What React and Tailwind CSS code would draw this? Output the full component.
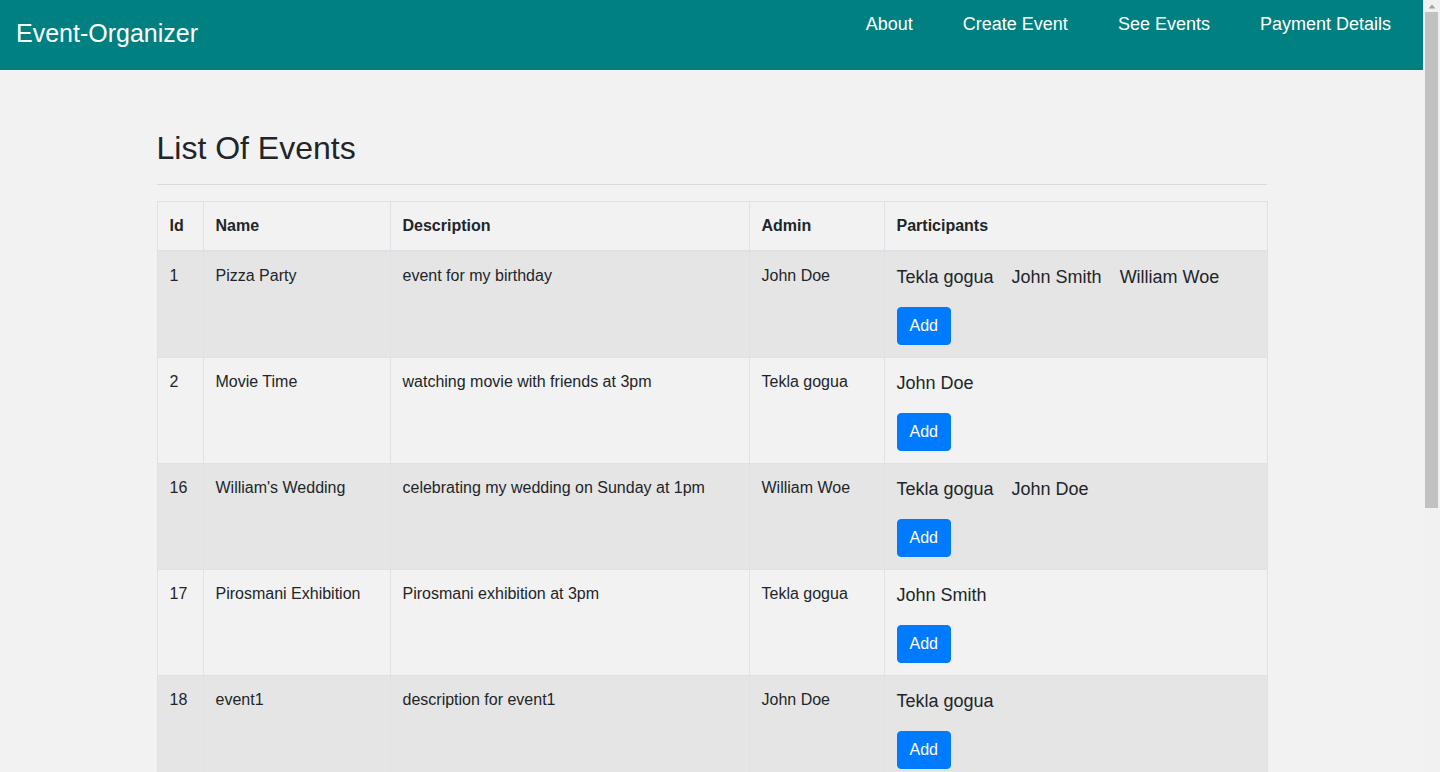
import React from "react";

const EVENTS = [
    { id: 1, name: "Pizza Party", description: "event for my birthday", admin: "John Doe", participants: ["Tekla gogua", "John Smith", "William Woe"] },
    { id: 2, name: "Movie Time", description: "watching movie with friends at 3pm", admin: "Tekla gogua", participants: ["John Doe"] },
    { id: 16, name: "William's Wedding", description: "celebrating my wedding on Sunday at 1pm", admin: "William Woe", participants: ["Tekla gogua", "John Doe"] },
    { id: 17, name: "Pirosmani Exhibition", description: "Pirosmani exhibition at 3pm", admin: "Tekla gogua", participants: ["John Smith"] },
    { id: 18, name: "event1", description: "description for event1", admin: "John Doe", participants: ["Tekla gogua"] },
    { id: 19, name: "event2", description: "description for event2", admin: "John Smith", participants: ["William Woe"] },
];

const NAV_LINKS = ["About", "Create Event", "See Events", "Payment Details"];

function Navbar() {
    return (
        <nav className="h-[70px] shrink-0 bg-[#008080] flex justify-between items-start">
            <a href="#" className="pl-4 pt-[17px] text-[25px] leading-[32px] text-white">
                Event-Organizer
            </a>
            <ul className="flex pr-[7px] pt-[12px]">
                {NAV_LINKS.map((link) => (
                    <li key={link}>
                        <a href="#" className="block px-[25px] text-[18px] leading-[24px] text-white">
                            {link}
                        </a>
                    </li>
                ))}
            </ul>
        </nav>
    );
}

function EventRow({ event, striped }) {
    const cell = "border border-[#dee2e6] p-3 align-top";
    return (
        <tr className={striped ? "bg-[#e5e5e5]" : "bg-[#f2f2f2]"}>
            <td className={cell}>{event.id}</td>
            <td className={cell}>{event.name}</td>
            <td className={cell}>{event.description}</td>
            <td className={cell}>{event.admin}</td>
            <td className={cell}>
                <div className="flex gap-[18px] text-[18px] leading-[27px] mb-4">
                    {event.participants.map((p) => (
                        <span key={p}>{p}</span>
                    ))}
                </div>
                <button
                    type="button"
                    className="h-[38px] px-3 border border-[#007bff] rounded bg-[#007bff] text-white text-[16px] leading-6"
                >
                    Add
                </button>
            </td>
        </tr>
    );
}

// fake window scrollbar, the page is taller than the viewport
function Scrollbar() {
    return (
        <aside className="w-[17px] shrink-0 h-screen bg-[#f1f1f1] flex flex-col items-center">
            <div className="h-[12px] w-full flex items-center justify-center">
                <svg width="8" height="5" viewBox="0 0 8 5">
                    <path d="M4 0.5 L7.5 4.5 L0.5 4.5 Z" fill="#a3a3a3" />
                </svg>
            </div>
            <div className="w-[13px] h-[496px] bg-[#c1c1c1]" />
        </aside>
    );
}

export default function App() {
    return (
        <div className="flex h-screen overflow-hidden bg-[#f2f2f2] text-[#212529] font-['Liberation_Sans',Arial,sans-serif] text-[16px] leading-6">
            <div className="flex-1 min-w-0 flex flex-col">
                <Navbar />
                <main className="w-[1110px] mx-auto pt-[59px]">
                    <h2 className="text-[32px] leading-[38px] font-normal">List Of Events</h2>
                    <hr className="mt-[17px] mb-4 border-t border-[#dadada]" />
                    <table className="w-full table-fixed border-collapse">
                        <colgroup>
                            <col className="w-[46px]" />
                            <col className="w-[187px]" />
                            <col className="w-[359px]" />
                            <col className="w-[135px]" />
                            <col className="w-[383px]" />
                        </colgroup>
                        <thead>
                            <tr>
                                {["Id", "Name", "Description", "Admin", "Participants"].map((h) => (
                                    <th
                                        key={h}
                                        className="border border-[#dee2e6] border-b-2 p-3 text-left font-bold align-bottom"
                                    >
                                        {h}
                                    </th>
                                ))}
                            </tr>
                        </thead>
                        <tbody>
                            {EVENTS.map((event, i) => (
                                <EventRow key={event.id} event={event} striped={i % 2 === 0} />
                            ))}
                        </tbody>
                    </table>
                </main>
            </div>
            <Scrollbar />
        </div>
    );
}
